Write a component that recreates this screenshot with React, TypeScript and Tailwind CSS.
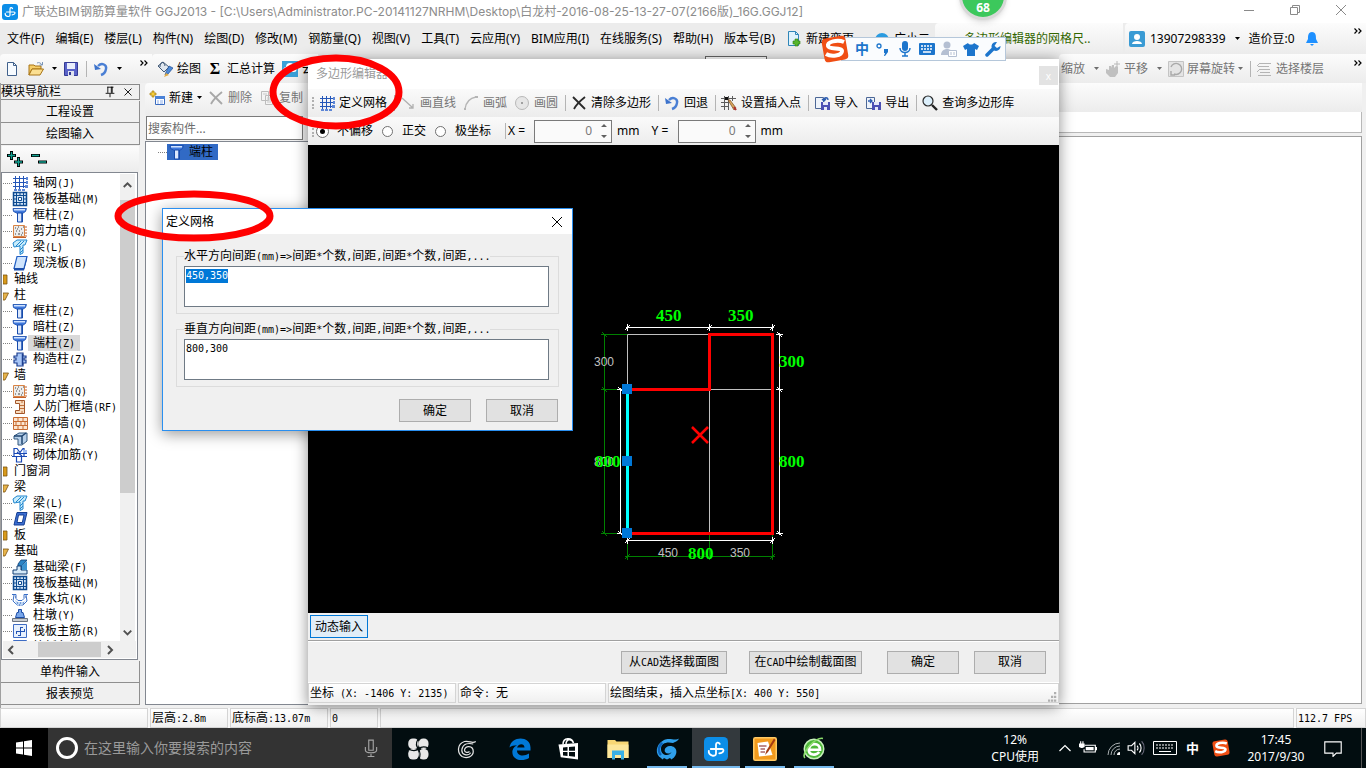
import { useEffect, useRef } from 'react';
import type { ReactNode } from 'react';

interface TreeNode {
  label: string;
  icon?: ReactNode;
  open?: boolean;
  selected?: boolean;
}

const Svg = ({ children, className = 'w-4 h-4' }: { children: ReactNode; className?: string }) => (
  <svg viewBox="0 0 16 16" className={`shrink-0 ${className}`} fill="none" aria-hidden="true">
    {children}
  </svg>
);

/* ---------- tree icons ---------- */

const GridIcon = () => (
  <Svg>
    <path d="M3.500 1v14M7.500 1v14M11.500 1v12M1 3.500h14M1 7.500h14M1 11.500h12" stroke="#2456b8" />
    <path d="M14 2h2v3h-2zM14 6h2v3h-2zM13 10h3v3h-3zM2 14h3v2H2zM6 14h3v2H6zM10 14h3v2h-3z" fill="#5d86d6" />
  </Svg>
);
const RaftIcon = () => (
  <Svg>
    <path d="M1.500 1.500h13v13h-13z" fill="#cfe2f6" stroke="#0d4a90" strokeWidth="1.500" />
    <path d="M4.500 2v12M11.500 2v12M2 4.500h12M2 11.500h12M8 2v3M8 11v3M2 8h3M11 8h3" stroke="#0d4a90" />
    <path d="M6.500 6.500h3v3h-3z" fill="#fff" stroke="#0d4a90" />
  </Svg>
);
const ColumnIcon = () => (
  <Svg>
    <path d="M1 1.500h13.500l-1 3-3 2H5.500l-4-2z" fill="#3f78dd" stroke="#174bab" strokeWidth=".8" />
    <path d="M2 2h11v1.500H2z" fill="#cfe2ff" />
    <path d="M5.500 6h5v9h-5z" fill="#dbe8fd" stroke="#174bab" />
    <path d="M10 6v9" stroke="#174bab" strokeWidth="1.500" />
  </Svg>
);
const WallIcon = () => (
  <Svg>
    <path d="M1.500 2.500h11v11h-11z" fill="#ececec" stroke="#d98445" />
    <path d="M3 5h1M6 4h1M9 6h1M4 8h1M7 8h1M10 10h1M3 11h1M6 11h2M11 4h1M9 12h1M5 6h1" stroke="#444" />
    <path d="M13 4h2M13 7h2M13 10h2M13 13h2M1 14.500h13" stroke="#c4602a" />
  </Svg>
);
const BeamIcon = () => (
  <Svg>
    <path d="M1 4l4-3h10l-2 5h-2v8l-3 1.500V7L2 8z" fill="#c9ecfb" stroke="#2287cf" />
    <path d="M4 7l5-5M7 7l5-5M8 11l3-3M8 14l3-3" stroke="#2287cf" />
  </Svg>
);
const SlabIcon = () => (
  <Svg>
    <path d="M5 1.500h10l-3 12H2z" fill="#cfe4fd" stroke="#2360c4" strokeWidth="1.200" />
    <path d="M2 13h10l3-11.500v3l-3 11H2z" fill="#1b4ead" />
  </Svg>
);
const TieColumnIcon = () => (
  <Svg>
    <path d="M5 2h6v3h3v2h-2v2h2v3h-3v3H5v-3H2V9h2V7H2V5h3z" fill="#a8c6f6" stroke="#1d3f8f" strokeWidth="1.200" />
    <path d="M10.500 3v11" stroke="#1d3f8f" strokeWidth="1.500" />
  </Svg>
);
const DoorWallIcon = () => (
  <Svg>
    <path d="M3.500 1.500h9v13h-9v-3h4v-7h-4z" fill="#f7dcc0" stroke="#a3562a" />
    <path d="M8 6.500h4M8 9.500h4M10 2v2M10 12v2" stroke="#c0703a" />
  </Svg>
);
const BrickIcon = () => (
  <Svg>
    <path d="M1.500 2.500h14v12h-14z" fill="#fbe6d2" stroke="#c86c32" />
    <path d="M1 6.500h14M1 10.500h14M6 3v3M11 3v3M4 7v3M9 7v3M13 7v3M6 11v3M11 11v3" stroke="#c86c32" />
  </Svg>
);
const HiddenBeamIcon = () => (
  <Svg>
    <path d="M2 5l5-3h8v8l-5 4H6V8H2z" fill="#b7d0ea" stroke="#33587f" />
    <path d="M2 5h8v8M10 5l4-3" stroke="#1f4470" strokeWidth="1.500" />
  </Svg>
);
const RebarIcon = () => (
  <Svg>
    <path d="M2 9V1.500h3l3 4 3-4h1V9M0 9.500h15M2 6.500h13M4.500 10v5h5v-5M5 5l5 4" stroke="#1747b4" strokeWidth="1.200" />
    <path d="M11 3h4v3h-4z" fill="#9ebcf3" />
  </Svg>
);
const RingBeamIcon = () => (
  <Svg>
    <path d="M5 1.500h10l-3 12.500H2z" fill="#3c6fd2" stroke="#163f93" />
    <path d="M6.500 4h5.500l-1.700 7.500H5z" fill="#fff" stroke="#163f93" />
  </Svg>
);
const FootBeamIcon = () => (
  <Svg>
    <path d="M9 1h6l-5 5v5H6V5z" fill="#2a83c5" stroke="#123f74" strokeWidth=".8" />
    <path d="M1 11h4V7h4v4h6v4H1z" fill="#d4e8f7" stroke="#123f74" />
    <path d="M10 6l5-4v9h-5z" fill="#3c93d0" />
  </Svg>
);
const PitIcon = () => (
  <Svg>
    <path d="M0 3.500h4v4l2 2h4l2-2v-4h4M2 4l-1 6 4 4h6l4-4-1-6" stroke="#3a6fc6" />
    <path d="M3 9l3 2h5l3-2-3 4-2 1.500H6L4 13z" fill="#bcd6f5" />
    <path d="M5 12h1M8 12h1M11 12h1M7 14h1M3 6h1M13 6h1" stroke="#2f5db2" />
  </Svg>
);
const PierIcon = () => (
  <Svg>
    <path d="M6.500 2.500h3v3h1.500l1.500 5h-9l1.500-5h1.500z" fill="#78a6ea" stroke="#1c4da6" />
    <path d="M.5 11.500h15v3H.5z" fill="#c9cdd2" stroke="#6c7480" />
  </Svg>
);
const RaftBarIcon = () => (
  <Svg>
    <path d="M1.500 1.500h13v13h-13z" fill="#e8f1fd" stroke="#3e6cc4" />
    <path d="M8.500 4v9M4 8.500h9M4.500 8v3M8 4.500h3M9 12.500H6M12.500 6v3" stroke="#2354b4" />
  </Svg>
);

const tree: TreeNode[] = [
  { label: '轴网(J)', icon: <GridIcon /> },
  { label: '筏板基础(M)', icon: <RaftIcon /> },
  { label: '框柱(Z)', icon: <ColumnIcon /> },
  { label: '剪力墙(Q)', icon: <WallIcon /> },
  { label: '梁(L)', icon: <BeamIcon /> },
  { label: '现浇板(B)', icon: <SlabIcon /> },
  { label: '轴线' },
  { label: '柱', open: true },
  { label: '框柱(Z)', icon: <ColumnIcon /> },
  { label: '暗柱(Z)', icon: <ColumnIcon /> },
  { label: '端柱(Z)', icon: <ColumnIcon />, selected: true },
  { label: '构造柱(Z)', icon: <TieColumnIcon /> },
  { label: '墙', open: true },
  { label: '剪力墙(Q)', icon: <WallIcon /> },
  { label: '人防门框墙(RF)', icon: <DoorWallIcon /> },
  { label: '砌体墙(Q)', icon: <BrickIcon /> },
  { label: '暗梁(A)', icon: <HiddenBeamIcon /> },
  { label: '砌体加筋(Y)', icon: <RebarIcon /> },
  { label: '门窗洞' },
  { label: '梁', open: true },
  { label: '梁(L)', icon: <BeamIcon /> },
  { label: '圈梁(E)', icon: <RingBeamIcon /> },
  { label: '板' },
  { label: '基础', open: true },
  { label: '基础梁(F)', icon: <FootBeamIcon /> },
  { label: '筏板基础(M)', icon: <RaftIcon /> },
  { label: '集水坑(K)', icon: <PitIcon /> },
  { label: '柱墩(Y)', icon: <PierIcon /> },
  { label: '筏板主筋(R)', icon: <RaftBarIcon /> },
  { label: '筏板负筋(X)', icon: <RaftBarIcon /> },
];

const menus = [
  '文件(F)', '编辑(E)', '楼层(L)', '构件(N)', '绘图(D)', '修改(M)', '钢筋量(Q)',
  '视图(V)', '工具(T)', '云应用(Y)', 'BIM应用(I)', '在线服务(S)', '帮助(H)', '版本号(B)',
];

/* ---------- toolbar icons ---------- */

const UndoIcon = () => (
  <Svg>
    <path d="M5 5c4-4 9-1 8 3-.5 3-2 5-5 6" stroke="#4a7fd4" strokeWidth="2.400" />
    <path d="M1 3l1 6 6-1z" fill="#3d73cc" />
  </Svg>
);
const NewIcon = () => (
  <Svg>
    <path d="M3.500 1.500h6l3 3v10h-9z" fill="#f7fbff" stroke="#41618c" />
    <path d="M9.500 1.500v3h3" stroke="#41618c" />
  </Svg>
);
const FolderIcon = () => (
  <Svg>
    <path d="M1 4h5l1 1h6v3H4l-3 6z" fill="#f5cd68" stroke="#a87416" />
    <path d="M4 8h11.500L12 14H1z" fill="#fbdf91" stroke="#a87416" />
    <path d="M9 2c2-1 4 0 5 2M14.500 1v3h-3" stroke="#7a95b8" />
  </Svg>
);
const SaveIcon = () => (
  <Svg>
    <path d="M1.500 1.500h13v13h-13z" fill="#5a63c8" stroke="#343a94" />
    <path d="M4 2h8v6H4z" fill="#e9eefb" />
    <path d="M5 10h6v5H5z" fill="#dfe3ee" />
    <path d="M6 11h2v3H6z" fill="#343a94" />
  </Svg>
);
const PaintIcon = () => (
  <Svg>
    <path d="M1 5l5-4 6 5-5 5z" fill="#dfe6ee" stroke="#425a78" />
    <path d="M3 6c0-6 4-6 5-1" stroke="#425a78" />
    <path d="M12 5l4 2-5 6-3 1 1-3z" fill="#4c8ad8" stroke="#224f94" strokeWidth=".7" />
    <path d="M7 16l2-4 3 2z" fill="#e0a940" />
  </Svg>
);
const CloudIcon = () => (
  <Svg>
    <path d="M0 0h16v16H0z" fill="#3aa0d8" />
    <path d="M4 11a2.500 2.500 0 0 1 0-5 4 4 0 0 1 8 0 2.500 2.500 0 0 1 0 5z" fill="#fff" />
  </Svg>
);
const AddIcon = () => (
  <Svg>
    <path d="M6.500 6.500h9v8h-9z" fill="#fff" stroke="#3a6cc0" />
    <path d="M6 6h10v3H6z" fill="#4b82d8" />
    <path d="M8 11h2M11 11h3M8 13h2M11 13h3" stroke="#8badea" />
    <path d="M3 1h2v2h2v2H5v2H3V5H1V3h2z" fill="#f6ce3c" stroke="#a37b0f" strokeWidth=".7" />
  </Svg>
);
const CrossIcon = ({ color }: { color: string }) => (
  <Svg>
    <path d="M2 2c4 4 8 8 12 12M14 2C9 6 5 10 3 14" stroke={color} strokeWidth="1.800" />
  </Svg>
);
const CopyIcon = () => (
  <Svg>
    <path d="M2.500 1.500h7v9h-7zM6.500 5.500h7v9h-7z" fill="#f4f4f4" stroke="#bdbdbd" />
    <path d="M8 8h4M8 10h4M8 12h4M4 4h4" stroke="#c8c8c8" />
  </Svg>
);
const LineIcon = () => (
  <Svg>
    <path d="M2 3l11 10M13 9v4H9" stroke="#b0b0b0" strokeWidth="1.300" />
  </Svg>
);
const ArcIcon = () => (
  <Svg>
    <path d="M2 14C3 7 7 3 13 2" stroke="#b5b5b5" strokeWidth="1.300" />
    <path d="M1 13h2v2H1zM12 1h3v2h-3z" fill="#b5b5b5" />
  </Svg>
);
const CircleIcon = () => (
  <Svg>
    <circle cx="8" cy="8" r="6.500" fill="#e6e6e6" stroke="#b8b8b8" />
    <path d="M7 7h2v2H7z" fill="#a0a0a0" />
  </Svg>
);
const InsertIcon = () => (
  <Svg>
    <path d="M3.500 1v14M7.500 1v14M11.500 1v5M0 3.500h15M0 7.500h8M0 11.500h8" stroke="#5c5c5c" />
    <path d="M7 5h2l6 8-2 2z" fill="#d9a65a" stroke="#7a4a20" strokeWidth=".7" />
    <path d="M4 2h3v3H4z" fill="#111" />
    <path d="M13 12l2 3" stroke="#b03030" strokeWidth="2" />
  </Svg>
);
const ImportIcon = ({ flip }: { flip?: boolean }) => (
  <Svg>
    <path d="M1.500 2.500h8v11h-8z" fill="#eef3fa" stroke="#4c6796" />
    <path d={flip ? 'M3 6h4M5 4l2 2-2 2' : 'M14 5c0-3-4-3-4 0M8 4l2 2 2-2'} stroke="#2b5cb0" strokeWidth="1.300" />
    <path d="M7 7h9v8H7z" fill="#4c50b4" />
    <path d="M9 7h5v3H9zM10 12h3v3h-3z" fill="#e6e8f8" />
  </Svg>
);
const SearchIcon = () => (
  <Svg>
    <circle cx="6" cy="6" r="5" fill="#dceffb" stroke="#2a2a2a" strokeWidth="1.200" />
    <path d="M10 10l5 5" stroke="#222" strokeWidth="2.400" />
  </Svg>
);
const HandIcon = () => (
  <Svg>
    <path d="M1 8l3 1V5h2v2l1-3h2v3l2-2 2 1v6l-3 4H5l-4-4z" fill="#c0c0c0" />
    <path d="M12 0v6M9 3h6" stroke="#b8b8b8" />
  </Svg>
);
const RotateIcon = () => (
  <Svg>
    <path d="M.5.5h15v15H.5z" fill="#e4e4e4" stroke="#c4c4c4" />
    <path d="M3 6a5.500 5.500 0 1 1 3 7M3 10v4h4" stroke="#a9a9a9" strokeWidth="1.400" />
  </Svg>
);
const FloorsIcon = () => (
  <Svg>
    <path d="M4 2.500h11M2 5.500h11M4 8.500h10M4 11.500h10M2 14.500h13M4 2L1 5M4 8l-3 3" stroke="#b4b4b4" />
  </Svg>
);
const ChangeIcon = () => (
  <Svg>
    <path d="M2.500.5h7l3 3v11h-10z" fill="#dff2fc" stroke="#2f86b8" />
    <path d="M9.500.5v3h3" stroke="#2f86b8" />
    <path d="M9 8h3v2h2v3h-2v2H9v-2H7v-3h2z" fill="#55b52c" stroke="#2f7d12" strokeWidth=".6" />
  </Svg>
);
const AppIcon = ({ className = 'w-4 h-4' }: { className?: string }) => (
  <Svg className={className}>
    <rect width="16" height="16" rx="3" fill="#0c8ee8" />
    <path
      d="M10.500 4.600C9.800 3.200 8 3.500 8 5v6c0 1.300-1.200 1.700-2.500 1.400C4 12 3 10.800 3.200 9.300M4.500 8H12c1.500 0 1.500 2.600-1.800 2.900"
      stroke="#fff"
      strokeWidth="1.200"
      strokeLinecap="round"
    />
  </Svg>
);

const Caret = ({ gray }: { gray?: boolean }) => (
  <svg viewBox="0 0 5 3" className="w-[5px] h-[3px] shrink-0" aria-hidden="true">
    <path d="M0 0h5L2.500 3z" fill={gray ? '#6d6d6d' : '#000'} />
  </svg>
);
const Sep = () => (
  <span className="flex w-[6px] shrink-0 justify-center">
    <span className="h-4 w-px bg-[#b4b4b4]" />
  </span>
);
const More = () => (
  <svg viewBox="0 0 8 6" className="w-2 h-[6px] shrink-0" fill="none" aria-hidden="true">
    <path d="M.5.500L3 3 .5 5.500M4.500.500L7 3 4.500 5.500" stroke="#000" strokeWidth="1.200" />
  </svg>
);
const Grip = () => <span className="ml-1 h-3 w-0 shrink-0 border-l-2 border-dotted border-[#b0b0b0]" />;

const ToolButton = ({ icon, label, disabled }: { icon: ReactNode; label: string; disabled?: boolean }) => (
  <button
    type="button"
    disabled={disabled}
    className="flex h-6 shrink-0 items-center gap-1 whitespace-nowrap pl-[3px] pr-1 text-black disabled:text-[#757575]"
  >
    {icon}
    {label}
  </button>
);

/* SimSun-like setting: full-width characters at 12px, ASCII at half that advance */
const Song = ({ text }: { text: string }) => (
  <span className="whitespace-pre">
    {text.split(/([\x20-\x7e]+)/).map((part, i) =>
      i % 2 ? (
        <span key={i} className="font-['DejaVu_Sans_Mono',monospace] text-[10px] leading-none">{part}</span>
      ) : (
        part
      ),
    )}
  </span>
);

const PushButton = ({ label, width }: { label: string; width: string }) => (
  <button
    type="button"
    className={`h-[23px] whitespace-nowrap border border-[#adadad] bg-[#e1e1e1] leading-none ${width}`}
  >
    <Song text={label} />
  </button>
);

const bar = 'rounded-l bg-linear-to-b from-[#fcfcfc] to-[#ececec]';

function TitleBar() {
  return (
    <header className="flex h-[23px] shrink-0 items-center bg-white pl-[2px] text-[#8c8c8c]">
      <AppIcon />
      <h1 className="ml-1 flex-1 truncate font-['Inter','Noto_Sans_CJK_SC',sans-serif]">
        广联达BIM钢筋算量软件 GGJ2013 - [C:\Users\Administrator.PC-20141127NRHM\Desktop\白龙村-2016-08-25-13-27-07(2166版)_16G.GGJ12]
      </h1>
      <div className="mb-[3px] flex gap-[30px] pr-[17px]">
        <button type="button" aria-label="最小化">
          <Svg><path d="M3 8.500h10" stroke="#8a8a8a" /></Svg>
        </button>
        <button type="button" aria-label="还原">
          <Svg><path d="M3.500 5.500h7v7h-7zM5.500 5.500v-2h7v7h-2" stroke="#8a8a8a" /></Svg>
        </button>
        <button type="button" aria-label="关闭">
          <Svg><path d="M3 3l10 10M13 3L3 13" stroke="#8a8a8a" /></Svg>
        </button>
      </div>
    </header>
  );
}

function MenuBar() {
  return (
    <nav className="flex h-[31px] shrink-0 items-center justify-between bg-[#ececec]">
      <div className="flex items-center gap-[11px] whitespace-nowrap pl-[7px]">
        {menus.map((m) => (
          <a key={m} href="#">{m}</a>
        ))}
        <a href="#" className="flex items-center gap-1">
          <ChangeIcon />
          新建变更
          <span className="ml-1"><Caret /></span>
        </a>
        <a href="#" className="-ml-1 flex items-center gap-1">
          <Svg>
            <path d="M1 9a7 7 0 0 1 14 0c0 3-3 5-7 5S1 12 1 9z" fill="#2a9be0" />
            <circle cx="5.500" cy="8" r="1.500" fill="#fff" />
            <circle cx="10.500" cy="8" r="1.500" fill="#fff" />
          </Svg>
          广小二
        </a>
      </div>
      <div className="flex h-full items-center gap-[2px]">
        <a href="#" className={`flex h-full w-[188px] items-center pl-[29px] text-[#336600] ${bar}`}>多边形编辑器的网格尺..</a>
        <div className={`flex h-full w-[241px] items-center gap-[5px] pl-1 ${bar}`}>
          <Svg>
            <rect width="16" height="16" rx="2" fill="#3a9bd4" />
            <circle cx="8" cy="6" r="3" fill="#fff" />
            <path d="M3 13c0-4 10-4 10 0z" fill="#fff" />
          </Svg>
          13907298339
          <span className="mx-1"><Caret /></span>
          造价豆:0
          <Svg className="w-4 h-4 ml-1">
            <path d="M8 1c4 0 4 4 4 7l2 4H2l2-4c0-3 0-7 4-7zM6 13h4l-2 2z" fill="#1e90ff" />
          </Svg>
          <span className="ml-auto self-start pr-1 pt-[5px]"><More /></span>
        </div>
      </div>
    </nav>
  );
}

function MainToolbar() {
  return (
    <div className="flex h-[29px] shrink-0 justify-between bg-[#ececec]">
      <div className="flex">
        <div className={`flex w-[152px] items-center pl-1 ${bar}`}>
          <button type="button" aria-label="新建"><NewIcon /></button>
          <button type="button" aria-label="打开" className="ml-2 flex items-center gap-2"><FolderIcon /><Caret /></button>
          <button type="button" aria-label="保存" className="ml-[6px]"><SaveIcon /></button>
          <span className="ml-1"><Sep /></span>
          <button type="button" aria-label="撤销" className="ml-1 flex items-center gap-2"><UndoIcon /><Caret /></button>
          <span className="mb-3 ml-auto pr-1"><More /></span>
        </div>
        <div className={`flex items-center gap-1 pl-[2px] ${bar}`}>
          <ToolButton icon={<PaintIcon />} label="绘图" />
          <button type="button" className="flex items-center gap-[6px]">
            <span className="w-3 font-['Liberation_Serif',serif] text-[16px] font-bold">Σ</span>汇总计算
          </button>
          <ToolButton icon={<CloudIcon />} label="云" />
        </div>
      </div>
      <span className="ml-auto mr-[292px] mt-[2px] h-3 w-[62px] border border-[#666] bg-white" />
      <div className={`flex w-[307px] items-center pl-[2px] text-[#757575] ${bar}`}>
        <button type="button" className="flex items-center gap-[9px]" disabled>缩放<Caret gray /></button>
        <button type="button" className="ml-[6px] flex items-center" disabled>
          <HandIcon /><span className="ml-[3px] mr-[9px]">平移</span><Caret gray />
        </button>
        <button type="button" className="ml-[6px] flex items-center" disabled>
          <RotateIcon /><span className="ml-[3px] mr-[3px]">屏幕旋转</span><Caret gray />
        </button>
        <span className="ml-1"><Sep /></span>
        <ToolButton icon={<FloorsIcon />} label="选择楼层" disabled />
        <span className="mb-3 ml-auto pr-1"><More /></span>
      </div>
    </div>
  );
}

function Navigator() {
  return (
    <aside className="flex w-[140px] shrink-0 flex-col border-l border-[#a0a0a0] pb-[3px] pt-px">
      <h2 className="flex h-4 shrink-0 items-center justify-between border border-l-0 border-[#8a8a8a] pr-1">
        模块导航栏
        <span className="flex gap-1">
          <Svg className="w-[14px] h-[14px]"><path d="M5 2.500h7M5.500 2v7M9.500 2v7M10.500 2v7M3 9.500h10M8 10v4" stroke="#000" /></Svg>
          <Svg className="w-[14px] h-[14px]"><path d="M4 4l8 8M12 4l-8 8" stroke="#000" /></Svg>
        </span>
      </h2>
      <button type="button" className="mt-px h-[22px] shrink-0 border-b border-r border-[#8f8f8f] bg-[#f0f0f0] pt-px">工程设置</button>
      <button type="button" className="h-[22px] shrink-0 border-b border-r border-[#8f8f8f] bg-[#f0f0f0] pt-px">绘图输入</button>
      <div className="mx-px mt-px flex h-[26px] shrink-0 items-center gap-2 bg-linear-to-b from-[#fcfcfc] to-[#ececec] pl-[5px]">
        <button type="button" aria-label="展开">
          <Svg><path d="M4.500 0v9M0 4.500h9M11.500 6v10M7 11h9" stroke="#000" strokeWidth="3" /><path d="M4.500 1v7M1 4.500h7M11.500 7v8M8 11h7" stroke="#10a090" strokeWidth="1.300" /></Svg>
        </button>
        <button type="button" aria-label="折叠">
          <Svg><path d="M0 4.500h9M7 11h9" stroke="#000" strokeWidth="3" /><path d="M1 4.500h7M8 11h7" stroke="#10a090" strokeWidth="1.300" /></Svg>
        </button>
      </div>
      <div className="mr-[2px] flex min-h-0 flex-1 flex-col border border-[#828790] bg-white p-px">
        <div className="flex min-h-0 flex-1">
          <ul className="w-[117px] shrink-0 overflow-hidden pt-px">
            {tree.map((n, i) => (
              <li key={i} className="flex h-4 items-center whitespace-nowrap leading-4">
                {n.icon ? (
                  <>
                    <span className="w-[9px] shrink-0 border-b border-dotted border-[#808080]" />
                    {n.icon}
                    <span className={n.selected ? 'bg-[#d9d9d9] px-[5px]' : 'px-[5px]'}>
                      <Song text={n.label} />
                    </span>
                  </>
                ) : (
                  <>
                    <svg viewBox="0 0 6 12" className="h-3 w-[6px] shrink-0" aria-hidden="true">
                      {n.open ? (
                        <path d="M0 4h5.500L2 11H0z" fill="#e7b44c" stroke="#7c5310" strokeWidth=".8" />
                      ) : (
                        <path d="M0 2h4v9H0z" fill="#d89a1c" stroke="#7c5310" strokeWidth=".8" />
                      )}
                    </svg>
                    <span className="pl-[5px]">{n.label}</span>
                  </>
                )}
              </li>
            ))}
          </ul>
          <div className="flex w-[15px] flex-col items-center bg-[#f0f0f0]">
            <Svg className="w-[15px] h-[26px]"><path d="M4 8l4-4 4 4" stroke="#505050" strokeWidth="2" /></Svg>
            <div className="h-[293px] w-[15px] bg-[#cdcdcd]" />
            <Svg className="mt-auto w-[15px] h-[17px]"><path d="M4 6l4 4 4-4" stroke="#505050" strokeWidth="2" /></Svg>
          </div>
        </div>
        <div className="flex h-[17px] shrink-0 items-center bg-[#f0f0f0]">
          <Svg><path d="M10 4L6 8l4 4" stroke="#505050" strokeWidth="2" /></Svg>
          <div className="ml-[19px] h-[15px] w-[63px] bg-[#cdcdcd]" />
          <Svg><path d="M7 4l4 4-4 4" stroke="#505050" strokeWidth="2" /></Svg>
        </div>
      </div>
      <button type="button" className="mt-px h-[22px] shrink-0 border-b border-r border-[#8f8f8f] bg-[#f0f0f0] pt-px">单构件输入</button>
      <button type="button" className="h-[22px] shrink-0 border-b border-r border-[#8f8f8f] bg-[#f0f0f0] pt-px">报表预览</button>
    </aside>
  );
}

function Workspace() {
  return (
    <div className="flex min-h-0 min-w-0 flex-1 pl-[5px]">
      <section className="flex w-[180px] shrink-0 flex-col pb-[3px]">
        <div className={`flex h-[33px] shrink-0 items-center pb-1 ${bar}`}>
          <button type="button" className="flex items-center gap-1 pl-1"><AddIcon />新建<Caret /></button>
          <span className="ml-[3px] flex">
            <ToolButton icon={<CrossIcon color="#a8a8a8" />} label="删除" disabled />
            <ToolButton icon={<CopyIcon />} label="复制" disabled />
          </span>
        </div>
        <input
          type="search"
          aria-label="搜索构件"
          placeholder="搜索构件..."
          className="ml-px h-6 w-[157px] shrink-0 border border-[#7a7a7a] bg-white px-px outline-none placeholder:text-[#6d6d6d]"
        />
        <div className="mt-px flex-1 border border-[#828790] bg-white pl-3 pt-[2px]">
          <div className="flex h-4 items-center">
            <span className="w-[9px] border-b border-dotted border-[#808080]" />
            <span className="flex h-4 items-center gap-1 bg-[#316ac5] pl-[2px] pr-[5px]">
              <ColumnIcon />端柱
            </span>
          </div>
        </div>
      </section>
      <section className="flex min-w-0 flex-1 flex-col pb-1 pr-1">
        <div className={`h-[29px] shrink-0 ${bar}`} />
        <div className="h-[21px] shrink-0 border-b border-r border-[#b8b8b8] bg-white" />
        <div className="mt-[3px] flex-1 border border-[#a0a0a0] bg-white" />
      </section>
    </div>
  );
}

const Cell = ({ text, children, className }: { text?: string; children?: ReactNode; className: string }) => (
  <span className={`flex items-center border border-[#d4d4d4] bg-linear-to-b from-white to-[#f0f0f0] px-px ${className}`}>
    {text && <Song text={text} />}
    {children}
  </span>
);

function MainStatus() {
  return (
    <footer className="flex h-5 shrink-0 gap-[2px] bg-[#f8f8f8]">
      <Cell className="w-[148px]" />
      <Cell className="w-[78px]" text="层高:2.8m" />
      <Cell className="w-[98px]" text="底标高:13.07m" />
      <Cell className="w-12" text="0" />
      <Cell className="flex-1" />
      <Cell className="w-[70px]" text="112.7 FPS" />
    </footer>
  );
}

const TaskIcon = ({ children, running, active }: { children: ReactNode; running?: boolean; active?: boolean }) => (
  <button type="button" className={`flex h-10 w-12 flex-col items-center ${active ? 'bg-[#33393d]' : ''}`}>
    <span className="flex flex-1 items-center pt-[3px]">{children}</span>
    <span className={`h-[2px] ${active ? 'w-12' : 'w-10'} ${running ? 'bg-[#76b9ed]' : ''}`} />
  </button>
);

function Taskbar() {
  return (
    <footer className="flex h-10 shrink-0 items-center bg-[#020d10] text-white">
      <button type="button" aria-label="开始" className="flex h-10 w-12 items-center justify-center bg-black">
        <Svg><path d="M0 2.500l7-1v6H0zM8 1.300L16 0v7.500H8zM0 8.500h7v6l-7-1zM8 8.500h8V16l-8-1.300z" fill="#fff" /></Svg>
      </button>
      <label className="flex h-10 w-[344px] items-center bg-[#333] pl-2">
        <span className="h-[22px] w-[22px] shrink-0 rounded-full border-[3px] border-white" />
        <input
          type="text"
          aria-label="搜索"
          placeholder="在这里输入你要搜索的内容"
          className="ml-[6px] min-w-0 flex-1 bg-transparent text-[14px] outline-none placeholder:text-[#9a9a9a]"
        />
        <Svg className="mr-3 w-[18px] h-[18px]">
          <path d="M6 1h4v9H6zM3 7v3c0 3 10 3 10 0V7M8 13v2M5 15.500h6" stroke="#a5a5a5" />
        </Svg>
      </label>
      <div className="flex gap-px pl-[2px]">
        <TaskIcon>
          <Svg className="w-6 h-6">
            <rect x="1.500" y="1" width="7" height="7" rx="3" fill="#e8e8e8" />
            <rect x="8.500" y="1" width="6.500" height="7" rx="3" fill="#e8e8e8" />
            <rect x="1.500" y="8" width="7" height="7" rx="3" fill="#e8e8e8" />
            <rect x="8.500" y="8" width="6.500" height="7" rx="3" fill="#e8e8e8" />
            <path d="M8 1.500C6.500 4 7 6.500 8.300 8M15 7.500c-3-1.500-5-1-6.700.500M8.500 15c1.500-3 1-5-.2-7M1.500 8c3 1.500 5 1.500 6.800 0" stroke="#020d10" strokeWidth=".8" />
          </Svg>
        </TaskIcon>
        <TaskIcon>
          <Svg className="w-5 h-5">
            <path d="M15 2c-3 2-5-1-9 0-6 2-6 9-2 12 4 2 9 0 9-4 0-5-7-5-7-1 0 2 3 2 4 1M13 4c-4-1-8 0-9 4-1 5 5 6 7 3" stroke="#e4e4e4" />
          </Svg>
        </TaskIcon>
        <span className="w-[3px]" />
        <TaskIcon>
          <Svg className="w-6 h-6">
            <path d="M1 7c1-8 14-8 14 0v2H6c0 4 5 4 8 2v3c-5 3-12 1-11-5 .5-2 2-3 3-3.500C4 5.500 2 6 1 7zm5 0h5c0-3-4-3-5 0z" fill="#0078d7" fillRule="evenodd" />
          </Svg>
        </TaskIcon>
        <TaskIcon>
          <Svg className="w-6 h-6">
            <path d="M1 5l13-1v11L2.500 13.500z" fill="#fff" />
            <path d="M4 5c0-5 6-5 7-1M6 5c0-4 4-4 5-1" stroke="#fff" />
            <path d="M4 7l3-.3v2.500H4zM8 6.600l4-.3v2.900H8zM4 10h3v2.600L4 12.300zM8 10h4v3.200l-4-.5z" fill="#020d10" />
          </Svg>
        </TaskIcon>
        <TaskIcon>
          <Svg className="w-6 h-6">
            <path d="M1 2h5l1 1h8v11H1z" fill="#f8d775" />
            <path d="M1 5h14v9H1z" fill="#fde79b" />
            <path d="M4 9h8v6h-2v-3H6v3H4z" fill="#39b0e5" />
          </Svg>
        </TaskIcon>
        <TaskIcon running>
          <Svg className="w-6 h-6">
            <path d="M16 1c-3 2-6-1-10 1-6 3-6 10-2 12l1 1 1-1 2 1 2-1 1 1c5-3 4-9-1-9-4 0-5 5-1 5 1 0 1 0 2-1-1 3-7 3-7-2 0-4 4-5 8-4 2-1 3-1 4-3z" fill="#2fa0ec" />
            <path d="M5 4C2 6 2 10 4 12" stroke="#0b62b8" strokeWidth="1.500" />
          </Svg>
        </TaskIcon>
        <TaskIcon running active><AppIcon className="w-6 h-6" /></TaskIcon>
        <TaskIcon running>
          <Svg className="w-6 h-6">
            <rect x=".5" y=".5" width="15" height="15" rx="1" fill="#f29a1d" stroke="#ffc964" />
            <path d="M3 4l7-1 3 9-9 1z" fill="#fff" />
            <path d="M4 6h5M5 8h3M5 10h3" stroke="#a66" />
            <path d="M14 1L9 9l-1 3 2-2 5-8z" fill="#a53c12" />
          </Svg>
        </TaskIcon>
        <TaskIcon running>
          <Svg className="w-6 h-6">
            <circle cx="8" cy="8" r="6.500" fill="#4fb83a" stroke="#c5efb9" />
            <path d="M4 8.500h8c0-5-7-5-7.500 0 0 4 5 4 7 1.500" stroke="#fff" strokeWidth="1.800" />
            <path d="M2 14C-1 11 9 0 14 1" stroke="#8bdc6c" />
          </Svg>
        </TaskIcon>
      </div>
      <div className="ml-auto flex items-center">
        <div className="mr-[18px] text-center leading-[17px]">12%<br />CPU使用</div>
        <Svg className="mr-[6px] w-4 h-4"><path d="M2.500 11L8 5.500l5.500 5.500" stroke="#fff" strokeWidth="1.200" /></Svg>
        <Svg className="mr-2 w-[18px] h-[18px]">
          <path d="M5 5.500h9.500v6H4.500V9M15.500 7v3" stroke="#fff" />
          <path d="M6 7h7v3H6zM0 4h5v3L3 8H2L0 7zM1 2h1v2H1zM3 2h1v2H3z" fill="#fff" />
        </Svg>
        <Svg className="mr-[6px] w-4 h-4">
          <path d="M3 15A12 12 0 0 1 15 3M6 15a9 9 0 0 1 9-9M9 15a6 6 0 0 1 6-6" stroke="#aab0b2" />
          <path d="M12 15a3 3 0 0 1 3-3v3z" fill="#fff" />
        </Svg>
        <Svg className="mr-2 w-[18px] h-[18px]">
          <path d="M1 6h3l3-3v10l-3-3H1zM9 6c1 1 1 3 0 4M11 4c2 2 2 6 0 8" stroke="#fff" />
          <path d="M13 2c3 3 3 9 0 12" stroke="#667" />
        </Svg>
        <svg viewBox="0 0 24 14" className="mr-[9px] h-[14px] w-6" fill="none" aria-hidden="true">
          <path d="M.5.500h23v13H.5z" stroke="#fff" />
          <path d="M3 4h18M3 7h18" stroke="#fff" strokeDasharray="2 1" />
          <path d="M6 10.500h12" stroke="#fff" />
        </svg>
        <span className="mr-[13px] text-[13px] font-bold">中</span>
        <SogouLogo className="mr-[15px] h-[18px] w-[18px]" />
        <div className="w-[62px] text-center leading-[17px]">17:45<br />2017/9/30</div>
        <button type="button" aria-label="通知" className="ml-[17px] mr-[19px]">
          <Svg className="w-[18px] h-[18px]"><path d="M.7 2.500h14.600v10H11l-3 3v-3H.7z" stroke="#fff" /></Svg>
        </button>
        <span className="h-10 w-[5px] border-l border-[#555]" />
      </div>
    </footer>
  );
}

const SogouLogo = ({ className }: { className: string }) => (
  <svg viewBox="0 0 28 28" className={`shrink-0 ${className}`} fill="none" aria-hidden="true">
    <rect x="2" y="2" width="24" height="24" rx="4" fill="#f04e14" transform="rotate(-10 14 14)" />
    <path d="M23 7C16 4 6 7 7 11c1 4 14 1 14 5 0 5-11 6-16 3" stroke="#fff" strokeWidth="4" />
  </svg>
);

function InputMethodBar() {
  return (
    <div className="absolute left-[821px] top-[35px] flex items-center">
      <SogouLogo className="z-10 h-7 w-7" />
      <div className="-ml-2 flex h-6 w-[165px] items-center gap-[6px] border border-[#b5c7da] bg-[#fafcfe] pl-[13px] text-[#1c75cc]">
        <span className="text-[14px] font-bold leading-none">中</span>
        <Svg>
          <circle cx="4" cy="5" r="2" stroke="#1c75cc" strokeWidth="1.300" />
          <path d="M9 8h4v3l-3 4H9l1-3H9z" fill="#1c75cc" />
        </Svg>
        <Svg><path d="M5 3a3 3 0 0 1 6 0v4a3 3 0 0 1-6 0z" fill="#1c75cc" /><path d="M3 7c0 6 10 6 10 0M8 11v4M5 15h6" stroke="#1c75cc" strokeWidth="1.500" /></Svg>
        <Svg>
          <rect y="2" width="16" height="12" rx="1" fill="#1c75cc" />
          <path d="M2 5h12M2 8h12" stroke="#fff" strokeWidth="1.500" strokeDasharray="2 1" />
          <path d="M4 11h8" stroke="#fff" strokeWidth="1.500" />
        </Svg>
        <Svg>
          <circle cx="6" cy="4" r="3.500" fill="#b4bfd2" />
          <path d="M0 14c0-8 12-8 12 0z" fill="#b4bfd2" />
          <path d="M7.500 9.500h8v6h-8zM10 11v3M13 11v3" fill="#fff" stroke="#b4bfd2" />
        </Svg>
        <Svg><path d="M5 2c1 2 5 2 6 0l5 3-2 4-2-1v7H4V8L2 9 0 5z" fill="#1c75cc" /></Svg>
        <Svg>
          <path d="M2 14l7-7" stroke="#1c75cc" strokeWidth="3.500" strokeLinecap="round" />
          <path d="M12 1a4.500 4.500 0 1 0 3.500 4L12 7 9.500 5z" fill="#1c75cc" />
        </Svg>
      </div>
    </div>
  );
}

const NumberBox = ({ name }: { name: string }) => (
  <label className="flex items-center">
    <span className="w-5 whitespace-nowrap">{name} =</span>
    <span className="ml-[6px] flex h-[23px] w-[78px] items-center border border-[#7a7a7a] bg-[#fafafa] pr-1">
      <input type="text" inputMode="numeric" disabled defaultValue="0" className="w-0 flex-1 pr-[9px] text-right text-[#7a7a7a]" />
      <svg viewBox="0 0 6 16" className="h-4 w-[6px]" aria-hidden="true">
        <path d="M0 4l3-3 3 3zM0 12h6l-3 3z" fill="#606060" />
      </svg>
    </span>
    <span className="ml-[5px]">mm</span>
  </label>
);

const modes = ['不偏移', '正交', '极坐标'];

function Drawing() {
  return (
    <svg viewBox="308 145 751 468" className="h-full w-full" fill="none" aria-label="端柱截面">
      <g stroke="#008000">
        <path d="M604.500 334v200M601 334.500h27M601 389.500h27M601 533.500h27M627.500 534v26M709.500 534v26M772.500 534v26M625 556.500h150" />
        <path d="M602 332l5 5M602 387l5 5M602 531l5 5M625 559l5-5M707 559l5-5M770 559l5-5" />
      </g>
      <g stroke="#c0c0c0">
        <path d="M627.500 389V334.500H709M709.500 389v144M710 389.500h62" />
      </g>
      <g fontFamily="Liberation Sans, sans-serif" fontSize="12" fill="#c0c0c0">
        <text x="594" y="366">300</text>
        <text x="594" y="466">800</text>
        <text x="658" y="557">450</text>
        <text x="730" y="557">350</text>
      </g>
      <g stroke="#fff">
        <path d="M626 327.500h148M627.500 324v7M709.500 324v7M772.500 324v7" />
        <path d="M779.500 333v202M776 334.500h7M776 389.500h7M776 533.500h7" />
        <path d="M620.500 388v146M617 389.500h11M617 533.500h11" />
        <path d="M626 540.500h148M627.500 537v7M772.500 537v7" />
        <path d="M625 330l5-5M707 330l5-5M770 330l5-5M777 332l5 5M777 387l5 5M777 531l5 5M618 387l5 5M618 531l5 5M625 543l5-5M770 543l5-5" />
      </g>
      <path d="M627 389.500h82.500v-55h63v199H627" stroke="#f00" strokeWidth="3" />
      <path d="M627.500 389v144" stroke="#0ff" strokeWidth="3" />
      <path d="M622 384h10v10h-10zM622 456h10v10h-10zM622 528h10v10h-10z" fill="#0078d7" />
      <path d="M692 427l16 16M708 427l-16 16" stroke="#f00" strokeWidth="2.500" />
      <g fontFamily="Liberation Serif, serif" fontSize="17" fontWeight="700" fill="#0f0">
        <text x="656" y="321">450</text>
        <text x="728" y="321">350</text>
        <text x="779" y="367">300</text>
        <text x="779" y="467">800</text>
        <text x="595" y="467">800</text>
        <text x="688" y="559">800</text>
      </g>
    </svg>
  );
}

function PolygonEditor() {
  return (
    <section className="absolute bottom-[63px] left-[308px] top-[59px] flex w-[751px] flex-col bg-[#f0f0f0] shadow-[0_2px_14px_rgba(0,0,0,0.45)]">
      <header className="flex h-[30px] shrink-0 items-center justify-between bg-white pl-2 pr-px text-[#9a9a9a]">
        <h2>多边形编辑器</h2>
        <button type="button" aria-label="关闭编辑器" className="mt-[3px] h-[19px] w-[19px] bg-[#e3e3e3] text-[10px] leading-none text-white">x</button>
      </header>
      <div className="flex h-7 shrink-0 items-center bg-linear-to-b from-[#fafafa] to-[#ececec]">
        <Grip />
        <span className="ml-[2px] flex items-center">
          <ToolButton icon={<GridIcon />} label="定义网格" />
          <Sep />
          <ToolButton icon={<LineIcon />} label="画直线" disabled />
          <ToolButton icon={<ArcIcon />} label="画弧" disabled />
          <ToolButton icon={<CircleIcon />} label="画圆" disabled />
          <Sep />
          <ToolButton icon={<CrossIcon color="#2a2a2a" />} label="清除多边形" />
          <Sep />
          <ToolButton icon={<UndoIcon />} label="回退" />
          <Sep />
          <ToolButton icon={<InsertIcon />} label="设置插入点" />
          <Sep />
          <ToolButton icon={<ImportIcon />} label="导入" />
          <ToolButton icon={<ImportIcon flip />} label="导出" />
          <Sep />
          <ToolButton icon={<SearchIcon />} label="查询多边形库" />
        </span>
      </div>
      <div className="flex h-7 shrink-0 items-center bg-linear-to-b from-[#fafafa] to-[#ececec]">
        <Grip />
        <div className="flex items-center gap-[9px] pl-[3px]">
          {modes.map((m, i) => (
            <label key={m} className="flex items-center gap-[9px]">
              <input
                type="radio"
                name="offset"
                defaultChecked={i === 0}
                className="h-[11px] w-[11px] appearance-none rounded-full border border-[#707070] bg-white checked:border-[3px] checked:border-white checked:bg-black checked:outline checked:outline-[#707070]"
              />
              {m}
            </label>
          ))}
        </div>
        <span className="ml-[11px]"><Sep /></span>
        <div className="flex gap-3">
          <NumberBox name="X" />
          <NumberBox name="Y" />
        </div>
      </div>
      <div className="min-h-0 flex-1 bg-black"><Drawing /></div>
      <div className="flex h-7 shrink-0 items-center border-b border-[#a0a0a0] pl-[2px]">
        <button type="button" className="h-[23px] w-[58px] border border-[#0078d7] bg-[#e1eef8]">动态输入</button>
      </div>
      <div className="flex h-[41px] shrink-0 items-center justify-end border-t border-white pr-[13px]">
        <PushButton label="从CAD选择截面图" width="w-[106px]" />
        <span className="ml-[22px] mr-[25px]"><PushButton label="在CAD中绘制截面图" width="w-[113px]" /></span>
        <div className="flex gap-[15px]">
          <PushButton label="确定" width="w-[72px]" />
          <PushButton label="取消" width="w-[72px]" />
        </div>
      </div>
      <div className="flex h-[23px] shrink-0 gap-[2px] border-t border-white pb-[2px]">
        <Cell className="w-[148px]" text="坐标 (X: -1406 Y: 2135)" />
        <Cell className="w-[148px]" text="命令: 无" />
        <Cell className="flex-1 justify-between" text="绘图结束，插入点坐标[X: 400 Y: 550]">
          <Svg className="w-3 h-3 self-end"><path d="M12 4h3M8 9h3M12 9h3M4 14h3M8 14h3M12 14h3" stroke="#b0b0b0" strokeWidth="3" /></Svg>
        </Cell>
      </div>
    </section>
  );
}

const axes = [
  { id: 'horizontal', label: '水平方向间距(mm)=>间距*个数,间距,间距*个数,间距,...', value: '450,350' },
  { id: 'vertical', label: '垂直方向间距(mm)=>间距*个数,间距,间距*个数,间距,...', value: '800,300' },
];

function GridDialog() {
  const first = useRef<HTMLTextAreaElement>(null);

  useEffect(() => {
    first.current?.focus();
    first.current?.select();
  }, []);

  return (
    <section
      role="dialog"
      aria-labelledby="grid-title"
      className="absolute left-[162px] top-[208px] flex w-[411px] flex-col border border-[#2a8ff0] bg-[#f0f0f0] pb-2 shadow-[0_3px_14px_rgba(0,0,0,0.4)]"
    >
      <header className="flex h-[25px] items-center justify-between bg-white pl-[3px] pr-[7px]">
        <h2 id="grid-title">定义网格</h2>
        <button type="button" aria-label="关闭">
          <Svg><path d="M3 3l10 10M13 3L3 13" stroke="#000" /></Svg>
        </button>
      </header>
      <form className="flex flex-col gap-2 px-[13px] pt-[15px]">
        {axes.map((a, i) => (
          <fieldset key={a.id} className="h-[65px] border border-[#dcdcdc] pl-[7px] pr-[9px]">
            <legend className="h-[14px] w-[306px] whitespace-nowrap leading-[14px]">
              <label htmlFor={a.id}><Song text={a.label} /></label>
            </legend>
            <textarea
              id={a.id}
              ref={i === 0 ? first : undefined}
              defaultValue={a.value}
              className="mt-[3px] block h-[41px] w-full resize-none border border-[#6f7a85] bg-white px-px pt-[2px] font-['DejaVu_Sans_Mono',monospace] text-[10px] leading-[14px] outline-none selection:bg-[#0078d7] selection:text-white"
            />
          </fieldset>
        ))}
        <div className="mt-1 flex justify-end gap-[15px] pr-px">
          <PushButton label="确定" width="w-[72px]" />
          <PushButton label="取消" width="w-[72px]" />
        </div>
      </form>
    </section>
  );
}

export default function App() {
  return (
    <div className="relative flex h-screen flex-col overflow-hidden bg-[#f0f0f0] font-['Noto_Sans','Noto_Sans_CJK_SC',sans-serif] text-[12px] leading-4 text-black">
      <TitleBar />
      <MenuBar />
      <MainToolbar />
      <main className="flex min-h-0 flex-1">
        <Navigator />
        <Workspace />
      </main>
      <MainStatus />
      <Taskbar />

      <PolygonEditor />
      <InputMethodBar />
      <div className="absolute -top-[28px] left-[959px] flex h-12 w-12 items-end justify-center rounded-full border-[3px] border-[#d8d8d8] bg-[#3cc85c] pb-[3px] text-[12px] font-bold leading-none text-white shadow-md">
        68
      </div>
      <GridDialog />

      {/* red marker rings */}
      <svg viewBox="0 0 420 260" className="pointer-events-none absolute left-0 top-0 h-[260px] w-[420px]" fill="none" aria-hidden="true">
        <ellipse cx="336" cy="92" rx="63" ry="34" stroke="#f00" strokeWidth="7" />
        <ellipse cx="194" cy="216" rx="76" ry="22" stroke="#f00" strokeWidth="7" />
      </svg>
    </div>
  );
}
